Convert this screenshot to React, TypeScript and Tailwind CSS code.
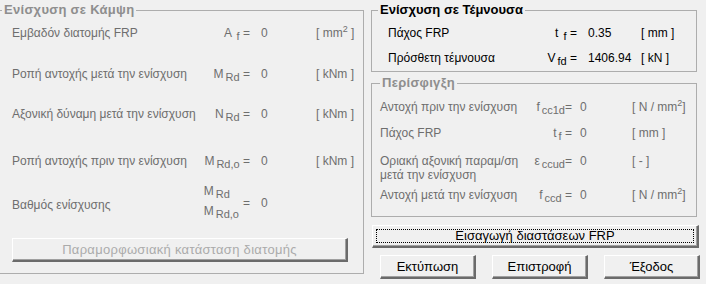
import React from 'react'

const Sub = ({ children }: { children: React.ReactNode }) => (
  <span className="relative top-[3px] ml-[2px] text-[11px]">{children}</span>
)

const Sup = ({ children }: { children: React.ReactNode }) => (
  <span className="relative -top-[5px] text-[9px]">{children}</span>
)

const btn =
  'bg-[#f0f0f0] border-t border-l border-t-white border-l-white border-r-2 border-b-2 border-r-[#6b6b6b] border-b-[#6b6b6b] shadow-[inset_-1px_-1px_0_#a0a0a0]'

const LeftRow = ({
  label,
  sym,
  unit,
  className,
}: {
  label: string
  sym: React.ReactNode
  unit: React.ReactNode
  className: string
}) => (
  <div className={`flex h-[20px] items-center whitespace-nowrap ${className}`}>
    <div className="w-[190px] pl-[12px]">{label}</div>
    <div className="w-[60px] text-right">{sym}</div>
    <div className="w-[66px] pl-[11px]">0</div>
    <div>{unit}</div>
  </div>
)

const ShearRow = ({
  label,
  sym,
  value,
  unit,
  className,
}: {
  label: string
  sym: React.ReactNode
  value: string
  unit: React.ReactNode
  className: string
}) => (
  <div className={`flex h-[20px] items-center whitespace-nowrap ${className}`}>
    <div className="w-[158px] pl-[16px]">{label}</div>
    <div className="w-[47px] text-right">{sym}</div>
    <div className="w-[64px] pl-[11px]">{value}</div>
    <div>{unit}</div>
  </div>
)

const ConfRow = ({
  label,
  sym,
  unit,
  className,
}: {
  label: React.ReactNode
  sym: React.ReactNode
  unit: React.ReactNode
  className: string
}) => (
  <div className={`flex whitespace-nowrap ${className}`}>
    <div className="w-[158px] pl-[8px]">{label}</div>
    <div className="w-[42px] text-right">{sym}</div>
    <div className="w-[60px] pl-[8px]">0</div>
    <div>{unit}</div>
  </div>
)

const App = () => {
  return (
    <main className="flex w-[706px] h-[284px] overflow-hidden bg-[#f0f0f0] font-['Liberation_Sans',Arial,sans-serif] text-[12px] items-start">
      {/* Ενίσχυση σε Κάμψη */}
      <fieldset className="-ml-px mt-[3px] w-[365px] h-[271px] border border-[#adadad] text-[#6e6e6e]">
        <legend className="ml-[2px] px-[2px] text-[13px] leading-[14px] font-bold tracking-[0.3px] text-[#8e8e8e]">
          Ενίσχυση σε Κάμψη
        </legend>
        <LeftRow
          className="mt-[6px]"
          label="Εμβαδόν διατομής FRP"
          sym={<>A <Sub>f</Sub> =</>}
          unit={<>[ mm<Sup>2</Sup> ]</>}
        />
        <LeftRow
          className="mt-[21px]"
          label="Ροπή αντοχής μετά την ενίσχυση"
          sym={<>M<Sub>Rd</Sub> =</>}
          unit="[ kNm ]"
        />
        <LeftRow
          className="mt-[20px]"
          label="Αξονική δύναμη μετά την ενίσχυση"
          sym={<>N<Sub>Rd</Sub> =</>}
          unit="[ kNm ]"
        />
        <LeftRow
          className="mt-[27px]"
          label="Ροπή αντοχής πριν την ενίσχυση"
          sym={<>M<Sub>Rd,o</Sub> =</>}
          unit="[ kNm ]"
        />
        <div className="mt-[10px] flex h-[40px] items-start whitespace-nowrap leading-[20px]">
          <div className="w-[190px] pl-[12px] pt-[14px]">Βαθμός ενίσχυσης</div>
          <div className="flex w-[60px] justify-end">
            <div className="flex flex-col">
              <span>M<Sub>Rd</Sub></span>
              <span>M<Sub>Rd,o</Sub></span>
            </div>
            <span className="ml-[4px] pt-[12px]">=</span>
          </div>
          <div className="pl-[11px] pt-[12px]">0</div>
        </div>
        <button
          className={`mt-[17px] ml-[12px] w-[336px] h-[24px] text-[13px] font-normal tracking-[0.3px] text-[#ababab] ${btn}`}
        >
          Παραμορφωσιακή κατάσταση διατομής
        </button>
      </fieldset>

      <section className="ml-[7px] flex flex-col">
        {/* Ενίσχυση σε Τέμνουσα */}
        <fieldset className="mt-[3px] w-[326px] h-[69px] border border-[#adadad] text-black">
          <legend className="ml-[6px] px-[2px] text-[13px] leading-[14px] font-bold">
            Ενίσχυση σε Τέμνουσα
          </legend>
          <ShearRow
            className="mt-[6px]"
            label="Πάχος FRP"
            sym={<>t <Sub>f</Sub> =</>}
            value="0.35"
            unit="[ mm ]"
          />
          <ShearRow
            className="mt-[5px]"
            label="Πρόσθετη τέμνουσα"
            sym={<>V<Sub>fd</Sub> =</>}
            value="1406.94"
            unit="[ kN ]"
          />
        </fieldset>

        {/* Περίσφιγξη */}
        <fieldset className="mt-[4px] w-[326px] h-[141px] border border-[#adadad] text-[#6e6e6e]">
          <legend className="ml-[8px] px-[2px] text-[13px] leading-[14px] font-bold tracking-[0.3px] text-[#8e8e8e]">
            Περίσφιγξη
          </legend>
          <ConfRow
            className="mt-[7px] h-[20px] items-center"
            label="Αντοχή πριν την ενίσχυση"
            sym={<>f<Sub>cc1d</Sub>=</>}
            unit={<>[ N / mm<Sup>2</Sup>]</>}
          />
          <ConfRow
            className="mt-[6px] h-[20px] items-center"
            label="Πάχος FRP"
            sym={<>t<Sub>f</Sub> =</>}
            unit="[ mm ]"
          />
          <ConfRow
            className="mt-[11px] h-[28px] items-start leading-[14px]"
            label={
              <>
                Οριακή αξονική παραμ/ση
                <br />
                μετά την ενίσχυση
              </>
            }
            sym={<>ε<Sub>ccud</Sub>=</>}
            unit="[ - ]"
          />
          <ConfRow
            className="mt-[3px] h-[20px] items-center"
            label="Αντοχή μετά την ενίσχυση"
            sym={<>f<Sub>ccd</Sub> =</>}
            unit={<>[ N / mm<Sup>2</Sup>]</>}
          />
        </fieldset>

        <button className={`mt-[8px] ml-px w-[327px] h-[23px] p-[3px] text-[13px] text-black ${btn}`}>
          <div className="flex h-full items-center justify-center border border-dotted border-black">
            Εισαγωγή διαστάσεων FRP
          </div>
        </button>

        <div className="mt-[7px] ml-[9px] flex gap-[16px] text-[13px] text-black">
          <button className={`w-[96px] h-[24px] ${btn}`}>Εκτύπωση</button>
          <button className={`w-[96px] h-[24px] ${btn}`}>Επιστροφή</button>
          <button className={`w-[96px] h-[24px] ${btn}`}>Έξοδος</button>
        </div>
      </section>
    </main>
  )
}

export default App
